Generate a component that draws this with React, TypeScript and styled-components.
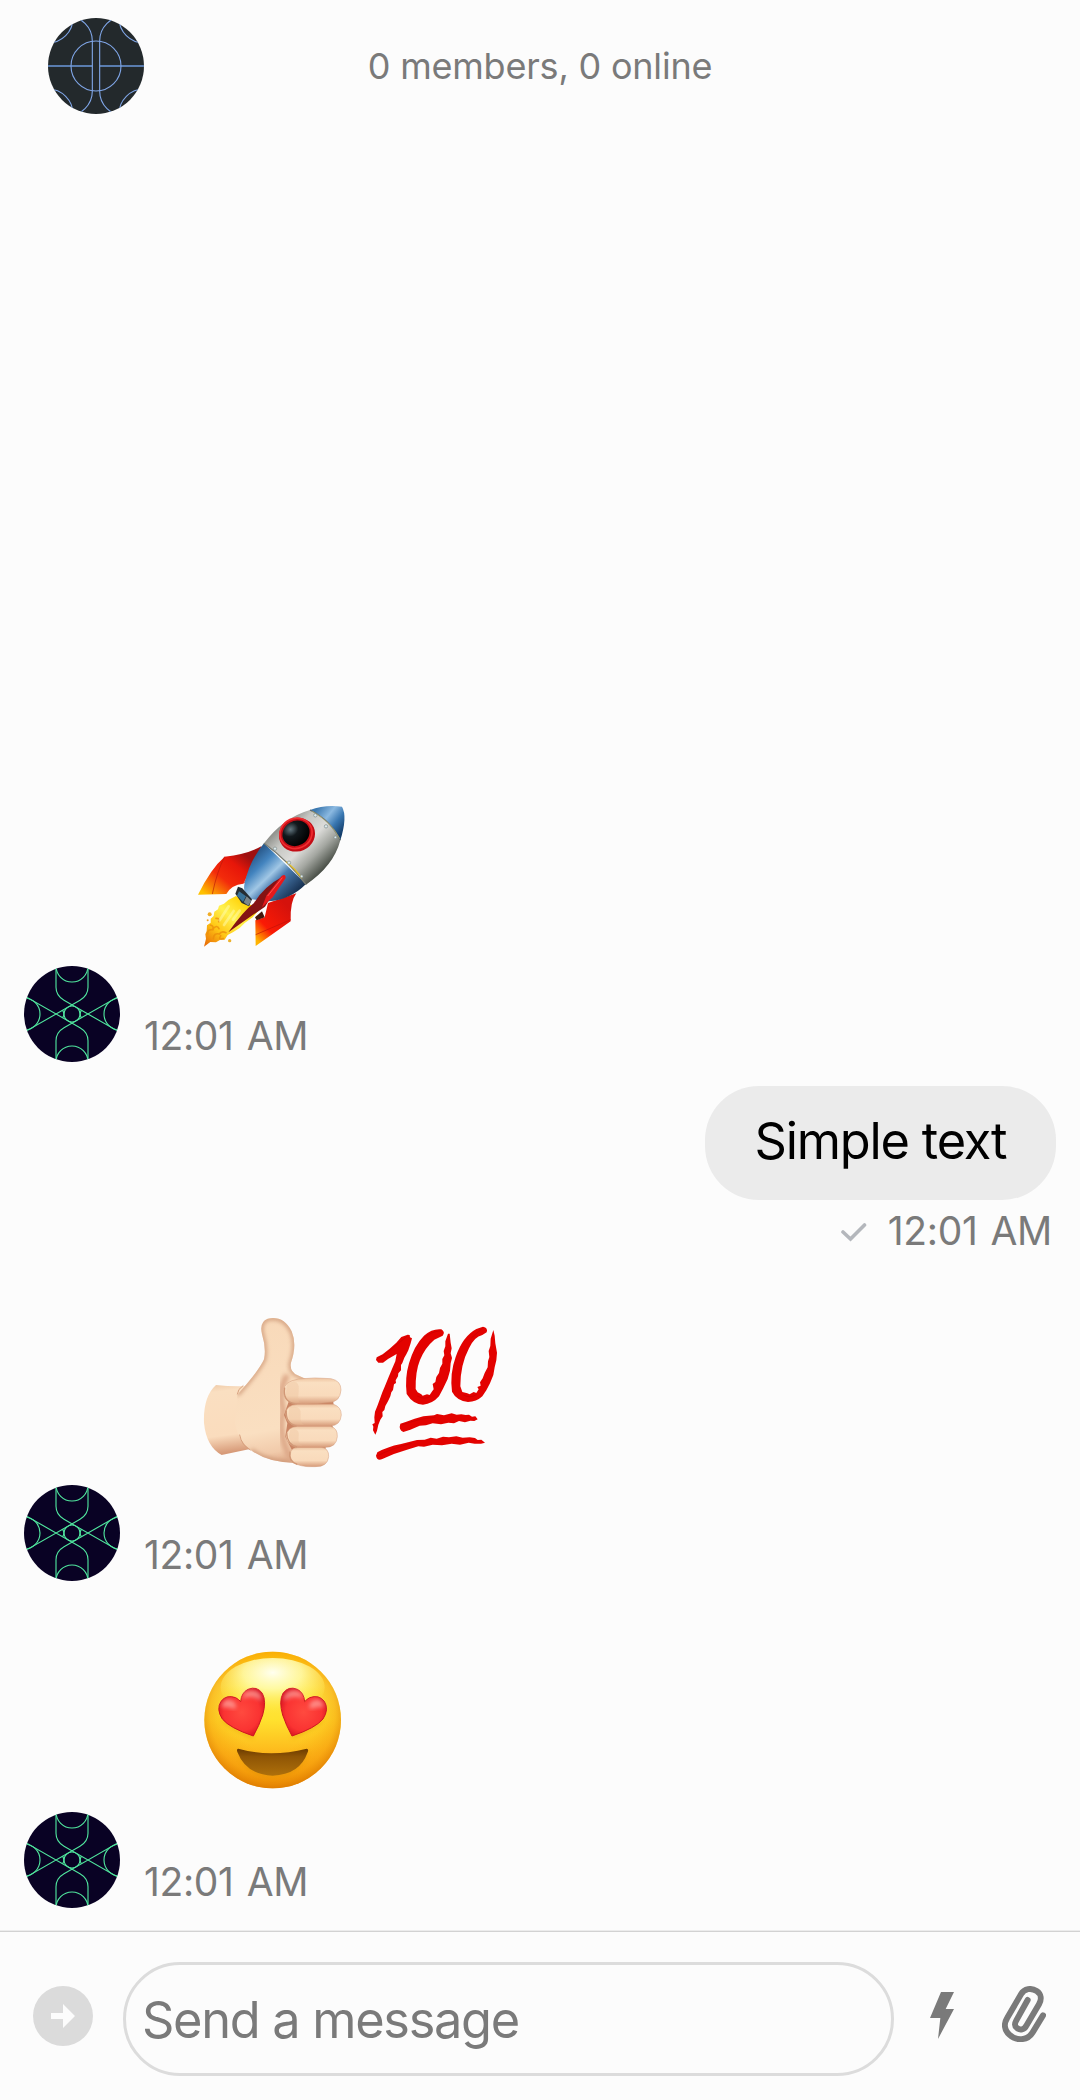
import React from "react";
import styled, { createGlobalStyle } from "styled-components";

const GlobalStyle = createGlobalStyle`
  * { box-sizing: border-box; }
  body { margin: 0; background: #fcfcfc; }
`;

const Screen = styled.div`
  width: 1080px;
  height: 2100px;
  display: flex;
  flex-direction: column;
  background: #fcfcfc;
  color: #000;
  font-family: Inter, "Liberation Sans", sans-serif;
  overflow: hidden;
`;

const Header = styled.header`
  flex: none;
  height: 132px;
  padding: 0 48px;
  display: grid;
  grid-template-columns: 96px 1fr 96px;
  align-items: center;
`;

const Status = styled.div`
  text-align: center;
  font-size: 36px;
  line-height: 44px;
  letter-spacing: -0.2px;
  color: #7a7a7a;
  white-space: nowrap;
`;

const Avatar = styled.svg`
  display: block;
  flex: none;
  width: 96px;
  height: 96px;
`;

const Thread = styled.main`
  flex: 1;
  min-height: 0;
  display: flex;
  flex-direction: column;
  justify-content: flex-end;
  padding: 0 24px 22px;
`;

const Incoming = styled.div<{ $height: number; $after?: number }>`
  display: flex;
  align-items: flex-end;
  gap: 24px;
  height: ${(p) => p.$height}px;
  margin-bottom: ${(p) => p.$after ?? 0}px;
`;

const IncomingBody = styled.div`
  height: 100%;
  display: flex;
  flex-direction: column;
  justify-content: space-between;
  padding-bottom: 2px;
`;

const Emojis = styled.div<{ $indent: number }>`
  display: flex;
  padding-left: ${(p) => p.$indent}px;
`;

const Emoji = styled.svg<{ $w: number; $h: number }>`
  display: block;
  width: ${(p) => p.$w}px;
  height: ${(p) => p.$h}px;
`;

const Time = styled.time`
  font-size: 39px;
  line-height: 48px;
  letter-spacing: -0.35px;
  word-spacing: 2.5px;
  color: #7a7a7a;
  white-space: nowrap;
`;

const Outgoing = styled.div`
  height: 190px;
  margin-bottom: 24px;
  display: flex;
  flex-direction: column;
  align-items: flex-end;
  gap: 7px;
`;

const Bubble = styled.div`
  width: 351px;
  height: 114px;
  border-radius: 54px;
  background: #ebebeb;
  display: flex;
  align-items: center;
  justify-content: center;
  font-size: 50.5px;
  line-height: 60px;
  letter-spacing: -1.2px;
  padding-bottom: 4px;
  white-space: nowrap;
`;

const Meta = styled.div`
  display: flex;
  align-items: center;
  gap: 20px;
  padding-right: 4px;
`;

const Check = styled.svg`
  width: 27px;
  height: 21px;
`;

const Composer = styled.form`
  flex: none;
  height: 170px;
  border-top: 1px solid #ececec;
  box-shadow: inset 0 1px #d2d2d2;
  display: flex;
  align-items: flex-start;
  padding: 31px 29px 0 33px;
`;

const IconButton = styled.button<{ $w: number; $h: number; $top: number; $left: number }>`
  flex: none;
  width: ${(p) => p.$w}px;
  height: ${(p) => p.$h}px;
  margin: ${(p) => p.$top}px 0 0 ${(p) => p.$left}px;
  padding: 0;
  border: 0;
  background: none;
  svg { display: block; width: 100%; height: 100%; }
`;

const Input = styled.input`
  flex: none;
  width: 771px;
  height: 114px;
  margin-left: 30px;
  padding: 0 16px;
  border: 3px solid #dcdcdc;
  border-radius: 57px;
  outline: 0;
  background: transparent;
  font: 400 50.5px/60px Inter, "Liberation Sans", sans-serif;
  letter-spacing: -1.3px;
  &::placeholder { color: #7a7a7a; opacity: 1; }
`;

const GroupAvatar = () => (
  <Avatar viewBox="54 54 288 288">
    <clipPath id="groupClip"><circle cx="198" cy="198" r="144" /></clipPath>
    <g clipPath="url(#groupClip)" fill="none" stroke="#7fa5e6" strokeWidth="3.4">
      <rect x="54" y="54" width="288" height="288" fill="#23292c" stroke="none" />
      <path d="M54 198H187M209 198H342" stroke="#597cae" strokeWidth="6" />
      <circle cx="198" cy="198" r="75" />
      <path d="M112 48A75 75 0 0 1 187 123V273A75 75 0 0 1 112 348M284 48A75 75 0 0 0 209 123V273A75 75 0 0 0 284 348" />
      <circle cx="54" cy="54" r="75" />
      <circle cx="342" cy="54" r="75" />
      <circle cx="54" cy="342" r="75" />
      <circle cx="342" cy="342" r="75" />
    </g>
  </Avatar>
);

const MemberAvatar = () => (
  <Avatar viewBox="27 27 288 288">
    <clipPath id="memberClip"><circle cx="171" cy="171" r="144" /></clipPath>
    <g clipPath="url(#memberClip)" fill="none" stroke="#50e69e" strokeWidth="3.4">
      <rect x="27" y="27" width="288" height="288" fill="#090224" stroke="none" />
      <path d="M27 226L195 130Q219 116 219 91V27M27 116L195 212Q219 226 219 251V315M315 226L147 130Q123 116 123 91V27M315 116L147 212Q123 226 123 251V315" />
      <circle cx="171" cy="27" r="48" />
      <circle cx="171" cy="315" r="48" />
      <circle cx="27" cy="171" r="48" />
      <circle cx="315" cy="171" r="48" />
      <circle cx="171" cy="171" r="24" />
      <path d="M143 160Q150 171 143 182M199 160Q192 171 199 182" />
    </g>
  </Avatar>
);

const Rocket = () => (
  <Emoji $w={180} $h={170} viewBox="0 0 540 510" role="img" aria-label="rocket">
    <defs>
      <linearGradient id="rBody" gradientUnits="userSpaceOnUse" x1="300" y1="105" x2="435" y2="240">
        <stop offset="0" stopColor="#8c8d88" /><stop offset=".22" stopColor="#c5c6c2" /><stop offset=".5" stopColor="#dcdcd9" /><stop offset=".72" stopColor="#a4a7a1" /><stop offset="1" stopColor="#41473f" />
      </linearGradient>
      <linearGradient id="rBlue" gradientUnits="userSpaceOnUse" x1="215" y1="190" x2="340" y2="320">
        <stop offset="0" stopColor="#245080" /><stop offset=".25" stopColor="#4384bf" /><stop offset=".47" stopColor="#a1c7e5" /><stop offset=".62" stopColor="#4b7db1" /><stop offset="1" stopColor="#152e4e" />
      </linearGradient>
      <linearGradient id="rNose" gradientUnits="userSpaceOnUse" x1="420" y1="45" x2="500" y2="110">
        <stop offset="0" stopColor="#3d79b0" /><stop offset=".38" stopColor="#8bb9e1" /><stop offset=".68" stopColor="#3977b1" /><stop offset="1" stopColor="#143e6c" />
      </linearGradient>
      <linearGradient id="rFin" gradientUnits="userSpaceOnUse" x1="190" y1="190" x2="85" y2="320">
        <stop offset="0" stopColor="#9f1010" /><stop offset=".25" stopColor="#e71609" /><stop offset=".58" stopColor="#f32b0b" /><stop offset="1" stopColor="#ffc100" />
      </linearGradient>
      <linearGradient id="rFin2" gradientUnits="userSpaceOnUse" x1="325" y1="350" x2="225" y2="445">
        <stop offset="0" stopColor="#d5120c" /><stop offset=".65" stopColor="#fa1a05" /><stop offset="1" stopColor="#ffb400" />
      </linearGradient>
      <linearGradient id="rFlame" gradientUnits="userSpaceOnUse" x1="195" y1="330" x2="75" y2="465">
        <stop offset="0" stopColor="#ffcf00" /><stop offset=".36" stopColor="#fff250" /><stop offset=".66" stopColor="#ffc815" /><stop offset="1" stopColor="#e96c06" />
      </linearGradient>
      <radialGradient id="rGlass" cx=".4" cy=".25" r=".75">
        <stop offset="0" stopColor="#647881" /><stop offset=".38" stopColor="#12191d" /><stop offset="1" stopColor="#000" />
      </radialGradient>
    </defs>
    <path fill="url(#rFlame)" d="M168 318L145 330L132 341L117 347L114 358L103 365L101 378L92 386L92 398L81 406L80 423L76 433L78 446L72 470L91 456L108 457L121 449L134 449L143 435L160 426L179 414L195 398L218 382L238 358L207 342Z" />
    <path fill="none" stroke="#eb8c0a" strokeWidth="5" strokeLinecap="round" opacity=".75" d="M91 405q11 3 8 14q-17-2-16 13M100 446q1-18 18-14q6-10 20-4M97 418q14-16 20-2M108 385q12-1 8 10M122 437q-8 14 8 9" />
    <path fill="none" stroke="#fffbb0" strokeWidth="8" strokeLinecap="round" opacity=".5" d="M146 349L119 391M161 363L132 405M179 362L159 389" />
    <circle cx="89" cy="373" r="6" fill="#f1ad26" /><circle cx="149" cy="452" r="5" fill="#eeb22c" /><circle cx="83" cy="391" r="3" fill="#efa22b" />
    <path fill="url(#rFin)" d="M245 168Q204 192 134 200Q93 235 54 314L139 312Q154 284 190 281Z" />
    <path d="M134 200Q111 244 97 312" fill="none" stroke="#b91a0b" strokeWidth="2" />
    <path d="M245 168L190 281Q213 275 237 192Z" fill="#ab1111" opacity=".65" />
    <path fill="url(#rFin2)" d="M264 339L349 310Q330 334 332 394L227 468L226 391L254 382Z" />
    <path d="M227 434L332 389" fill="none" stroke="#bf1208" strokeWidth="2" />
    <path fill="#45180d" d="M225 382L246 364L254 382L230 391Z" />
    <path fill="url(#rBlue)" d="M252 160L378 282Q330 330 266 334L207 327Q187 306 194 280Q207 215 252 160Z" />
    <path fill="#252d33" d="M174 290L187 295L216 328L207 349L185 339L166 311Z" />
    <path fill="#397399" d="M177 304L198 319L189 336L171 317Z" />
    <path fill="#7c878b" d="M200 319L214 332L205 347L191 337Z" />
    <path fill="#851313" d="M311 258Q252 289 222 339Q190 363 145 427L217 376L255 350Z" />
    <path fill="#e6191b" d="M305 258Q317 250 317 264L278 322L246 352L259 317Z" />
    <path fill="none" stroke="#ff5551" strokeWidth="3" d="M307 263L263 318" />
    <path fill="url(#rBody)" d="M252 160Q310 83 390 60Q454 90 481 151Q461 228 378 284Q324 208 252 160Z" />
    <path fill="url(#rNose)" d="M390 60Q433 44 486 50Q503 80 481 151Q453 87 390 60Z" />
    <path d="M390 60Q453 91 481 151" fill="none" stroke="#58656b" strokeWidth="4" />
    <path d="M397 64Q453 96 479 146" fill="none" stroke="#c3bc77" strokeWidth="2" />
    <path d="M252 160Q323 211 378 284" fill="none" stroke="#777a70" strokeWidth="4" />
    <path d="M319 215Q344 235 366 264" fill="none" stroke="#e3bd24" strokeWidth="4" />
    <ellipse cx="351" cy="134" rx="55" ry="50" transform="rotate(-24 351 134)" fill="#c30d15" />
    <ellipse cx="348" cy="130" rx="49" ry="45" transform="rotate(-24 348 130)" fill="none" stroke="#f02c30" strokeWidth="5" />
    <ellipse cx="348" cy="130" rx="42" ry="37" transform="rotate(-30 348 130)" fill="url(#rGlass)" />
    <g fill="#dce9ec" stroke="#7b898a" strokeWidth="2">
      <circle cx="406" cy="76" r="5" /><circle cx="438" cy="109" r="5" /><circle cx="466" cy="142" r="4" /><circle cx="285" cy="176" r="5" /><circle cx="327" cy="218" r="5" /><circle cx="365" cy="259" r="4" />
    </g>
  </Emoji>
);

const ThumbsUp = () => (
  <Emoji $w={160} $h={180} viewBox="0 0 480 540" role="img" aria-label="thumbs up">
    <defs>
      <linearGradient id="tWrist" x1="0" y1="0" x2=".1" y2="1">
        <stop offset="0" stopColor="#efcaa8" /><stop offset=".12" stopColor="#fadfc1" /><stop offset=".75" stopColor="#fadcbd" /><stop offset="1" stopColor="#d79a78" />
      </linearGradient>
      <linearGradient id="tPalm" x1=".5" y1="0" x2=".6" y2="1">
        <stop offset="0" stopColor="#f8d9b9" /><stop offset=".75" stopColor="#fadfc1" /><stop offset=".9" stopColor="#f1caaa" /><stop offset="1" stopColor="#d9a07f" />
      </linearGradient>
      <linearGradient id="tFinger" x1="0" y1="0" x2="0" y2="1">
        <stop offset="0" stopColor="#edc3a0" /><stop offset=".18" stopColor="#fadfc1" /><stop offset=".68" stopColor="#f9dabb" /><stop offset="1" stopColor="#d69a78" />
      </linearGradient>
      <clipPath id="tClip"><path d="M142 284Q207 212 222 178Q229 145 216 103Q207 66 233 56Q281 46 305 94Q322 134 303 188Q298 216 323 226L355 240L332 488Q241 493 183 451Q143 421 135 370Z" /></clipPath>
      <filter id="tBlur"><feGaussianBlur stdDeviation="6" /></filter>
    </defs>
    <path fill="url(#tWrist)" d="M78 255Q130 261 174 258L204 442L95 465Q49 440 42 369Q39 290 78 255Z" />
    <g clipPath="url(#tClip)">
      <rect x="130" y="40" width="230" height="460" fill="url(#tPalm)" />
      <path d="M142 284Q207 212 222 178Q229 145 216 103Q207 66 233 56Q281 46 305 94Q322 134 303 188Q298 216 323 226L355 240M332 488Q241 493 183 451" fill="none" stroke="#ce9877" strokeWidth="11" filter="url(#tBlur)" />
      <path d="M292 225Q263 272 280 333Q260 410 310 489" fill="none" stroke="#dda888" strokeWidth="18" filter="url(#tBlur)" />
    </g>
    <path d="M142 282Q143 267 159 257M149 405Q155 437 181 450" fill="none" stroke="#d8a17f" strokeWidth="3" strokeLinecap="round" />
    <path fill="#ca8564" d="M302 288L429 299L431 315L425 371L430 385L408 435L406 450L312 463L286 410L292 370L282 345Z" />
    <g fill="url(#tFinger)" stroke="#d59f7e" strokeWidth="1.5">
      <path d="M326 442H394Q417 445 416 470Q413 501 375 500Q331 502 305 486Q290 443 326 442Z" />
      <path d="M322 379H421Q443 384 442 410Q439 443 405 442H324Q293 439 288 410Q291 381 322 379Z" />
      <path d="M323 313H431Q454 321 454 345Q451 377 421 378H319Q289 373 287 342Q288 315 323 313Z" />
      <path d="M326 237Q374 231 423 236Q453 242 453 270Q450 307 417 307Q370 315 313 311Q281 304 281 273Q281 244 326 237Z" />
    </g>
    <g fill="none" stroke="#d19876" strokeWidth="4">
      <path d="M284 263Q278 304 313 311M289 331Q286 369 319 378M290 399Q291 433 321 441M300 455Q294 484 322 493" />
    </g>
    <path fill="#eac09c" opacity=".35" d="M291 250Q331 233 326 273T334 307Q292 312 287 289ZM298 322Q335 314 332 343T344 374Q300 378 295 352ZM301 389Q330 382 326 409T339 437Q303 440 296 410Z" />
  </Emoji>
);

const Hundred = () => (
  <Emoji $w={170} $h={180} viewBox="0 0 510 540" role="img" aria-label="hundred points">
    <g fill="#e30200">
      <path d="M173 104L179 105L180 112L186 115L182 130L175 151L169 163L163 173L157 189L153 195L153 211L145 220L144 229L137 241L138 249L132 253L129 270L124 277L121 289L114 304L106 318L103 330L97 336L98 349L91 359L85 374L81 392L76 404L69 391L70 380L67 373L74 369L73 352L75 335L82 318L90 296L97 277L105 258L115 233L126 207L136 184L140 162L114 177L99 188L85 188L78 180L80 172L98 163L119 146L139 128L154 111Z" />
      <path d="M274 88Q287 96 278 107L253 119Q224 144 210 180Q196 214 197 267L203 277L214 283L218 287L231 283L239 285L247 273L251 268L248 252L256 246L259 231L267 219L270 204L277 191L277 177L283 166L281 153L286 139L286 124L294 101L299 101L302 128L305 145L302 160L306 174L302 190L300 212L293 237L279 266L267 289Q247 312 219 314Q189 313 170 282Q164 234 177 190Q192 137 222 107Q247 85 274 88Z" />
      <path d="M399 80Q415 84 410 97L397 105Q373 110 357 145Q331 194 331 259L337 276L352 280L359 283L371 276L379 279L386 268L382 261L392 257L390 247L398 235L404 219L413 202L414 184L418 171L416 153L421 138L422 116L430 90L434 107L436 130L441 158L439 181L434 202L430 225L420 250L409 271L397 289Q379 306 354 306Q320 302 306 275Q299 220 317 171Q338 109 379 87Z" />
      <path d="M151 371L167 366L194 356L220 349L252 346L261 342L282 346L305 340L320 344L334 343L347 345L357 344L366 350L376 349L383 358L373 363L361 362L345 367L327 363L312 370L295 368L273 373L248 370L228 376L209 377L181 389L160 396Q145 389 151 371Z" />
      <path d="M82 457Q114 440 150 433L186 424L201 420L224 419L242 413L260 416L279 410L297 412L319 409L338 413L359 412L375 414L383 420L394 419L405 428L393 431L374 431L356 428L330 434L305 431L276 436L248 434L222 440L205 439L171 449Q134 459 97 477Q81 484 78 467Z" />
    </g>
    <g fill="none" stroke="#b80000" strokeWidth="3" opacity=".42" strokeLinecap="round">
      <path d="M82 176L101 166L170 110M222 114Q242 95 272 92M365 113L397 85M158 374Q211 355 255 352M87 465Q120 448 184 430M203 289Q225 300 240 290M342 286Q360 296 379 284" />
    </g>
  </Emoji>
);

const HeartEyes = () => (
  <Emoji $w={170} $h={180} viewBox="0 0 510 540" role="img" aria-label="heart eyes">
    <defs>
      <linearGradient id="hFace" x1="0" y1="0" x2="0" y2="1">
        <stop offset="0" stopColor="#ffc400" /><stop offset=".25" stopColor="#ffe94a" /><stop offset=".5" stopColor="#ffe12e" /><stop offset=".76" stopColor="#fdb51a" /><stop offset="1" stopColor="#ef8f00" />
      </linearGradient>
      <radialGradient id="hEdge" cx=".5" cy=".46" r=".55">
        <stop offset=".5" stopColor="#f9a80c" stopOpacity="0" /><stop offset=".83" stopColor="#f59a0b" stopOpacity=".5" /><stop offset="1" stopColor="#d87400" stopOpacity=".8" />
      </radialGradient>
      <radialGradient id="hShine" cx=".5" cy=".25" r=".7">
        <stop offset="0" stopColor="#fffff0" /><stop offset=".4" stopColor="#fffcae" stopOpacity=".85" /><stop offset="1" stopColor="#ffe83c" stopOpacity="0" />
      </radialGradient>
      <linearGradient id="hMouth" x1="0" y1="0" x2="0" y2="1">
        <stop offset="0" stopColor="#6b3b00" /><stop offset=".3" stopColor="#8f5505" /><stop offset="1" stopColor="#ae700b" />
      </linearGradient>
      <radialGradient id="hHeart" cx=".5" cy=".5" r=".6">
        <stop offset="0" stopColor="#ff4a3f" /><stop offset=".65" stopColor="#fa3332" /><stop offset="1" stopColor="#d30c1c" />
      </radialGradient>
      <filter id="hSoft"><feGaussianBlur stdDeviation="6" /></filter>
    </defs>
    <circle cx="248" cy="270" r="205" fill="url(#hFace)" />
    <circle cx="248" cy="270" r="205" fill="url(#hEdge)" />
    <ellipse cx="248" cy="172" rx="156" ry="88" fill="url(#hShine)" />
    <path d="M191 321Q119 294 98 268M306 321Q378 294 397 268M147 365Q176 439 248 439T349 365" fill="none" stroke="#d88a00" strokeWidth="8" opacity=".5" filter="url(#hSoft)" />
    <g id="heart">
      <path fill="url(#hHeart)" stroke="#ce1520" strokeWidth="3" d="M190 318Q119 294 97 267Q78 238 93 214Q109 193 137 203Q146 208 152 215Q154 188 174 178Q201 167 217 190Q230 214 218 255Q208 286 190 318Z" />
      <path d="M93 230Q101 204 121 209Q144 216 136 237Q109 230 93 230ZM157 206Q161 179 190 181Q216 185 215 212Q181 192 157 206Z" fill="#ffb4ad" opacity=".65" filter="url(#hSoft)" />
    </g>
    <use href="#heart" transform="matrix(-1 0 0 1 496 0)" />
    <path d="M145 356Q241 383 350 356Q357 357 353 367Q329 435 248 437Q169 435 142 366Q139 356 145 356Z" fill="url(#hMouth)" />
  </Emoji>
);

const SendIcon = () => (
  <svg viewBox="0 0 60 60">
    <circle cx="30" cy="30" r="30" fill="#dbdbdb" />
    <path d="M18 27H30V18L42 30L30 42V33H18Z" fill="#fcfcfc" />
  </svg>
);

const BoltIcon = () => (
  <svg viewBox="210 246 72 141"><path fill="#7a7a7a" d="M243 246H282L257 297H282L234 387L241 324H210Z" /></svg>
);

const ClipIcon = () => (
  <svg viewBox="426 228 132 168">
    <path fill="none" stroke="#7a7a7a" strokeWidth="18" strokeLinecap="round" strokeLinejoin="round" d="M549 316L518 367C502 393 468 393 448 374C433 360 431 341 441 325L483 253C493 235 514 233 530 243C544 252 545 269 537 283L499 347C493 359 480 362 471 354C462 347 464 340 469 331L503 270" />
  </svg>
);

export default function App() {
  return (
    <Screen>
      <GlobalStyle />
      <Header>
        <GroupAvatar />
        <Status>0 members, 0 online</Status>
      </Header>
      <Thread>
        <Incoming $height={272} $after={24}>
          <MemberAvatar />
          <IncomingBody>
            <Emojis $indent={36}><Rocket /></Emojis>
            <Time>12:01 AM</Time>
          </IncomingBody>
        </Incoming>
        <Outgoing>
          <Bubble>Simple text</Bubble>
          <Meta>
            <Check viewBox="0 0 27 21"><path d="M2 11L9.5 18L23.5 4" fill="none" stroke="#b4b7bc" strokeWidth="3.6" strokeLinecap="round" /></Check>
            <Time>12:01 AM</Time>
          </Meta>
        </Outgoing>
        <Incoming $height={281} $after={49}>
          <MemberAvatar />
          <IncomingBody>
            <Emojis $indent={46}><ThumbsUp /><Hundred /></Emojis>
            <Time>12:01 AM</Time>
          </IncomingBody>
        </Incoming>
        <Incoming $height={278}>
          <MemberAvatar />
          <IncomingBody>
            <Emojis $indent={46}><HeartEyes /></Emojis>
            <Time>12:01 AM</Time>
          </IncomingBody>
        </Incoming>
      </Thread>
      <Composer onSubmit={(e) => e.preventDefault()}>
        <IconButton type="button" aria-label="Send" $w={60} $h={60} $top={24} $left={0}><SendIcon /></IconButton>
        <Input placeholder="Send a message" />
        <IconButton type="button" aria-label="Commands" $w={24} $h={47} $top={30} $left={36}><BoltIcon /></IconButton>
        <IconButton type="button" aria-label="Attach" $w={44} $h={56} $top={24} $left={48}><ClipIcon /></IconButton>
      </Composer>
    </Screen>
  );
}
